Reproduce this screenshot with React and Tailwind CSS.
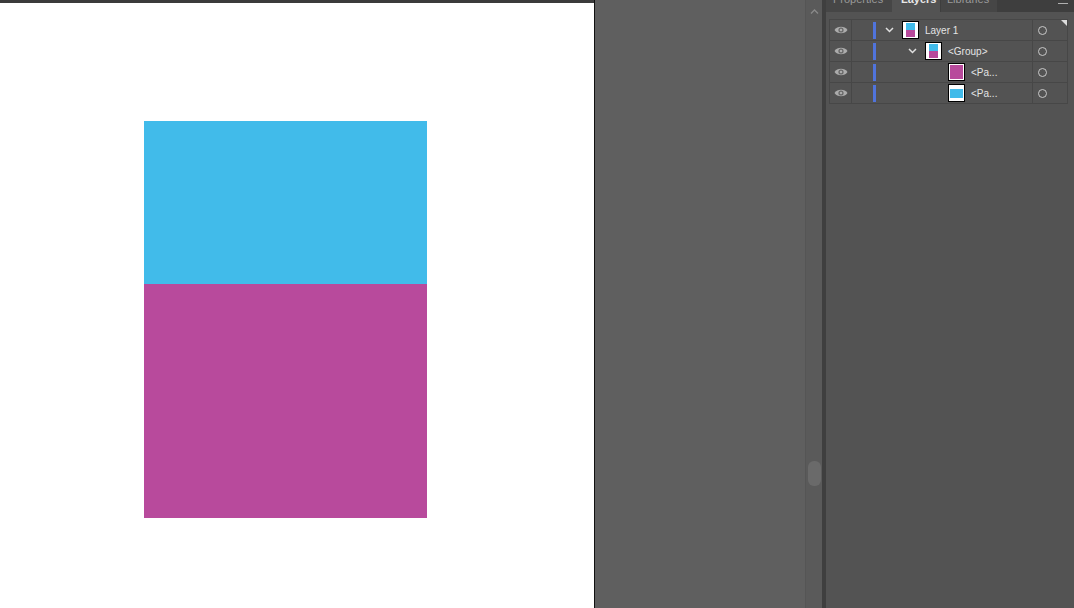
import React from 'react';

const Eye = () => (
    <svg width="14" height="10" viewBox="0 0 14 10">
        <path d="M0.5 5 C3.2 0.6 10.8 0.6 13.5 5 C10.8 9.4 3.2 9.4 0.5 5 Z" fill="#acacac" />
        <circle cx="7" cy="5" r="2.6" fill="#666" />
        <circle cx="7" cy="5" r="1.3" fill="#acacac" />
    </svg>
);

const Chevron = () => (
    <svg width="9" height="6" viewBox="0 0 9 6">
        <path d="M1 1 L4.5 4.5 L8 1" fill="none" stroke="#e0e0e0" strokeWidth="1.5" />
    </svg>
);

const Thumb = ({ kind }) => {
    let inner;
    if (kind === 'both') {
        inner = (
            <div className="flex h-full w-full flex-col px-[2px]">
                <div className="h-[7px] bg-[#41bbea]" />
                <div className="flex-1 bg-[#b84a9c]" />
            </div>
        );
    } else if (kind === 'magenta') {
        inner = <div className="h-full w-full bg-[#b84a9c]" />;
    } else {
        inner = (
            <div className="flex h-full w-full flex-col justify-center">
                <div className="h-[9px] bg-[#41bbea]" />
            </div>
        );
    }
    return (
        <div className="h-[18px] w-[17px] border border-black bg-white p-px">
            {inner}
        </div>
    );
};

const rows = [
    { indent: 0, chevron: true, thumb: 'both', label: 'Layer 1' },
    { indent: 23, chevron: true, thumb: 'both', label: '<Group>' },
    { indent: 46, chevron: false, thumb: 'magenta', label: '<Pa...' },
    { indent: 46, chevron: false, thumb: 'cyan', label: '<Pa...' },
];

const Row = ({ row, first }) => (
    <div className="relative flex h-[21px] border-b border-[#474747]">
        <div className="flex w-[22px] items-center justify-center border-r border-[#474747]">
            <Eye />
        </div>
        <div className="w-[21px]" />
        <div className="flex w-[4px] items-center">
            <div className="h-[17px] w-[3px] bg-[#5074dc]" />
        </div>
        <div className="flex flex-1 items-center" style={{ paddingLeft: row.indent }}>
            <div className="flex w-[25px] justify-center">{row.chevron && <Chevron />}</div>
            <Thumb kind={row.thumb} />
            <span className="ml-[6px] text-[10px] text-[#e4e4e4]">{row.label}</span>
        </div>
        <div className="flex w-[35px] items-center border-l border-[#474747] pl-[5px]">
            <div className="h-[9px] w-[9px] rounded-full border border-[#c8c8c8]" />
        </div>
        {first && (
            <div className="absolute right-0 top-0 h-0 w-0 border-l-[6px] border-t-[6px] border-l-transparent border-t-[#dcdcdc]" />
        )}
    </div>
);

const App = () => {
    return (
        <div className="flex h-[608px] w-[1074px] overflow-hidden font-['Liberation_Sans',sans-serif]">
            <div className="flex w-[594px] flex-col">
                <div className="h-[3px] bg-[#3b3b3b]" />
                <div className="flex-1 bg-white pl-[144px] pt-[118px]">
                    <div className="w-[283px]">
                        <div className="h-[163px] bg-[#41bbea]" />
                        <div className="h-[234px] bg-[#b84a9c]" />
                    </div>
                </div>
            </div>
            <div className="w-[211px] border-l border-[#111] bg-[#5f5f5f]" />
            <div className="flex w-[17px] flex-col items-center border-l border-[#555] bg-[#5a5a5a]">
                <svg className="mt-[9px]" width="9" height="5" viewBox="0 0 9 5">
                    <path d="M1 4.5 L4.5 1 L8 4.5" fill="none" stroke="#8a8a8a" strokeWidth="1.3" />
                </svg>
                <div className="mt-[447px] h-[25px] w-[13px] rounded-[6px] bg-[#6a6a6a]" />
            </div>
            <div className="w-[4px] bg-[#3f3f3f]" />
            <div className="flex flex-1 flex-col bg-[#535353]">
                <div className="flex h-[12px] bg-[#3e3e3e] text-[11px] leading-none text-[#9a9a9a]">
                    <div className="w-[66px] overflow-hidden bg-[#464646] pl-[7px]"><span className="-mt-[6px] block">Properties</span></div>
                    <div className="w-[48px] overflow-hidden bg-[#535353] pl-[9px] text-[#e8e8e8]"><span className="-mt-[6px] block font-bold">Layers</span></div>
                    <div className="ml-px w-[56px] overflow-hidden bg-[#464646] pl-[6px]"><span className="-mt-[6px] block">Libraries</span></div>
                    <div className="flex-1" />
                    <div className="mr-[6px] mt-[3px] h-px w-[10px] bg-[#b0b0b0]" />
                </div>
                <div className="ml-[3px] mr-[6px] mt-[7px] border-l border-r border-t border-[#474747]">
                    {rows.map((r, i) => (
                        <Row key={i} row={r} first={i === 0} />
                    ))}
                </div>
            </div>
        </div>
    );
};

export default App;
